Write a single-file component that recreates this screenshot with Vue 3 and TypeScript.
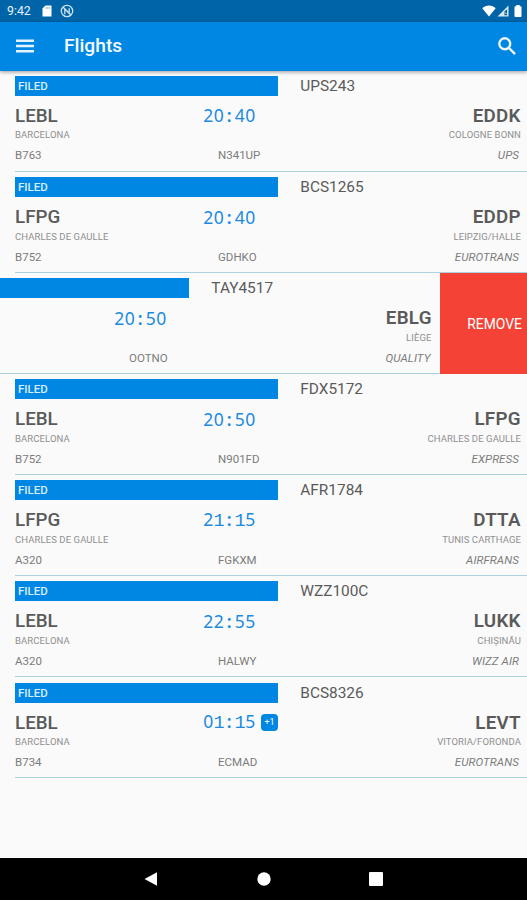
<script setup lang="ts">
interface Flight {
  callsign: string
  status: string
  from: string
  fromName: string
  time: string
  nextDay?: boolean
  to: string
  toName: string
  aircraft: string
  registration: string
  operator: string
  swiped?: boolean
}

const flights: Flight[] = [
  { callsign: 'UPS243', status: 'FILED', from: 'LEBL', fromName: 'BARCELONA', time: '20:40', to: 'EDDK', toName: 'COLOGNE BONN', aircraft: 'B763', registration: 'N341UP', operator: 'UPS' },
  { callsign: 'BCS1265', status: 'FILED', from: 'LFPG', fromName: 'CHARLES DE GAULLE', time: '20:40', to: 'EDDP', toName: 'LEIPZIG/HALLE', aircraft: 'B752', registration: 'GDHKO', operator: 'EUROTRANS' },
  { callsign: 'TAY4517', status: '', from: '', fromName: '', time: '20:50', to: 'EBLG', toName: 'LIÈGE', aircraft: '', registration: 'OOTNO', operator: 'QUALITY', swiped: true },
  { callsign: 'FDX5172', status: 'FILED', from: 'LEBL', fromName: 'BARCELONA', time: '20:50', to: 'LFPG', toName: 'CHARLES DE GAULLE', aircraft: 'B752', registration: 'N901FD', operator: 'EXPRESS' },
  { callsign: 'AFR1784', status: 'FILED', from: 'LFPG', fromName: 'CHARLES DE GAULLE', time: '21:15', to: 'DTTA', toName: 'TUNIS CARTHAGE', aircraft: 'A320', registration: 'FGKXM', operator: 'AIRFRANS' },
  { callsign: 'WZZ100C', status: 'FILED', from: 'LEBL', fromName: 'BARCELONA', time: '22:55', to: 'LUKK', toName: 'CHIȘINĂU', aircraft: 'A320', registration: 'HALWY', operator: 'WIZZ AIR' },
  { callsign: 'BCS8326', status: 'FILED', from: 'LEBL', fromName: 'BARCELONA', time: '01:15', nextDay: true, to: 'LEVT', toName: 'VITORIA/FORONDA', aircraft: 'B734', registration: 'ECMAD', operator: 'EUROTRANS' },
]
</script>

<template>
  <div class="screen">
    <div class="status">
      <span class="clock">9:42</span>
      <svg class="sd" viewBox="0 0 10 12"><path d="M3.4 0.5H9.5V11.5H0.5V3.6Z" fill="#fff" /><path d="M4 2V4M5.8 2V4M7.6 2V4" stroke="#0065a8" stroke-width=".7" opacity=".6" /></svg>
      <svg class="sync" viewBox="0 0 14 14" fill="none" stroke="#fff">
        <circle cx="7" cy="7" r="5.7" stroke-width="1.3" opacity=".8" />
        <path d="M4.8 10.2V5L9.2 9.4V4.2M3.2 3.2L10.8 10.8" stroke-width="1.3" opacity=".8" />
      </svg>
      <span class="spacer"></span>
      <svg class="wifi" viewBox="0 0 14 12"><path d="M0.3 3.2C4 -0.4 10 -0.4 13.7 3.2L7 11.5Z" fill="#fff" /></svg>
      <svg class="signal" viewBox="0 0 12 12"><path d="M0.5 11.5L11.5 0.5V11.5Z" fill="#fff" opacity=".85" /><path d="M7.4 6.6L10 4.2V10.2H7.4Z" fill="#0065a8" /><path d="M8 7.4L9.4 9" stroke="#fff" /></svg>
      <svg class="battery" viewBox="0 0 8 12"><path d="M2.3 0H5.7V1.2H6.6Q7.5 1.2 7.5 2.2V11Q7.5 12 6.6 12H1.4Q.5 12 .5 11V2.2Q.5 1.2 1.4 1.2H2.3Z" fill="#fff" /></svg>
    </div>
    <header class="appbar">
      <svg class="menu" viewBox="0 0 18 14"><path d="M0 1.7H18M0 7H18M0 12.3H18" stroke="#fff" stroke-width="2.5" opacity=".9" /></svg>
      <h1>Flights</h1>
      <svg class="search" viewBox="2.7 2.7 18.1 18.1"><path fill="#fff" stroke="#fff" stroke-width=".3" d="M15.5 14h-.79l-.28-.27A6.47 6.47 0 0 0 16 9.5 6.5 6.5 0 1 0 9.5 16c1.61 0 3.09-.59 4.23-1.57l.27.28v.79l5 4.99L20.49 19l-4.99-5zm-6 0C7.01 14 5 11.99 5 9.5S7.01 5 9.5 5 14 7.01 14 9.5 11.99 14 9.5 14z" /></svg>
    </header>
    <main class="list">
      <div v-for="f in flights" :key="f.callsign" class="row" :class="{ swiped: f.swiped }">
        <article class="flight">
          <div class="top">
            <div class="bar">{{ f.status }}</div>
            <div class="callsign">{{ f.callsign }}</div>
          </div>
          <div class="route">
            <b class="icao">{{ f.from }}</b>
            <span class="time"><i v-for="(c, n) in f.time" :key="n" :class="{ one: c === '1', colon: c === ':' }">{{ c }}</i></span>
            <span class="badge-slot"><span v-if="f.nextDay" class="badge">+1</span></span>
            <b class="icao to">{{ f.to }}</b>
          </div>
          <div class="names">
            <span>{{ f.fromName }}</span>
            <span>{{ f.toName }}</span>
          </div>
          <div class="details">
            <span class="aircraft">{{ f.aircraft }}</span>
            <span>{{ f.registration }}</span>
            <em>{{ f.operator }}</em>
          </div>
        </article>
        <button v-if="f.swiped" class="remove">REMOVE</button>
      </div>
    </main>
    <nav class="navbar">
      <svg viewBox="0 0 14 14"><path d="M13 0.3V13.7L0.5 7Z" fill="#fff" /></svg>
      <svg viewBox="0 0 14 14"><circle cx="7" cy="7" r="6.7" fill="#fff" /></svg>
      <svg viewBox="0 0 14 14"><rect width="14" height="14" rx="1" fill="#fff" /></svg>
    </nav>
  </div>
</template>

<style>
body { background: #fafafa; overflow: hidden; }
</style>

<style scoped>
.screen {
  width: 527px;
  height: 900px;
  display: flex;
  flex-direction: column;
  overflow: hidden;
  background: #fafafa;
  color: #5a5a5a;
  font-family: Roboto, sans-serif;
}
.status {
  height: 21.5px;
  flex: none;
  display: flex;
  align-items: center;
  padding: 0 5.5px 0 7px;
  background: #0065a8;
  color: #e8f2fa;
  font-size: 12.3px;
}
.clock { width: 35px; padding-top: 1px; }
.sd { width: 10px; height: 12px; }
.sync { width: 14px; height: 14px; margin-left: 7.5px; }
.spacer { flex: 1; }
.wifi { width: 14px; height: 12px; }
.signal { width: 12px; height: 12px; margin-left: 1px; }
.battery { width: 8px; height: 12px; margin-left: 5px; }
.appbar {
  height: 49.3px;
  flex: none;
  box-sizing: border-box;
  display: flex;
  align-items: center;
  padding: 0 11px 1px 16px;
  background: #0087e4;
  box-shadow: 0 1px 4px rgba(0, 0, 0, .4);
  z-index: 1;
}
.menu { width: 18px; height: 14px; }
h1 {
  flex: 1;
  margin: 0 0 0 30px;
  color: #f4faff;
  font-size: 19.2px;
  font-weight: 500;
}
.search { width: 18px; height: 18px; }
.list { flex: 1; }
.row { height: 101.1px; display: flex; overflow: hidden; }
.flight {
  width: 512px;
  margin-left: 15px;
  height: 101.1px;
  flex: none;
  box-sizing: border-box;
  padding-top: 5.2px;
  border-bottom: 1.5px solid #acd1df;
}
.swiped .flight { margin-left: -74px; width: 513.5px; }
.top { height: 20px; display: flex; align-items: center; }
.bar {
  width: 263px;
  height: 20px;
  box-sizing: border-box;
  padding-left: 3px;
  background: #0087e4;
  color: #d9edfc;
  font-size: 11.5px;
  font-weight: 500;
  line-height: 20px;
}
.callsign { margin-left: 22.3px; font-size: 15.4px; line-height: 20px; }
.route {
  height: 29px;
  padding: 6px 6.5px 0 0;
  box-sizing: border-box;
  display: grid;
  grid-template-columns: 188px 53px 1fr auto;
  grid-template-rows: 28px;
  align-items: center;
}
.icao { font-size: 18.8px; line-height: 28px; font-weight: 500; }
.to { font-weight: 600; letter-spacing: .25px; margin-right: -.25px; }
.time {
  display: flex;
  align-items: baseline;
  color: #1b8ae0;
  font-family: "Noto Sans", sans-serif;
  font-size: 17.5px;
  line-height: 27px;
}
.time i { width: 10.5px; flex: none; text-align: center; font-style: normal; }
.time .one { font-family: "Liberation Mono", monospace; font-size: 18.5px; }
.time .colon { font-weight: 600; }
.badge-slot { display: flex; padding-left: 5px; }
.badge {
  width: 17px;
  height: 16.5px;
  border-radius: 4px;
  background: #0087e4;
  color: #fff;
  font-size: 9px;
  line-height: 16.5px;
  text-align: center;
}
.names {
  height: 20px;
  padding-right: 6px;
  display: flex;
  align-items: center;
  justify-content: space-between;
  color: #8f8f8f;
  font-size: 9.5px;
  letter-spacing: .09px;
}
.details {
  height: 21px;
  padding-right: 8px;
  display: grid;
  grid-template-columns: 203px 1fr auto;
  align-items: center;
  color: #7c7c7c;
  font-size: 11.5px;
}
em { letter-spacing: .1px; }
.swiped .route, .swiped .names { padding-right: 8px; }
.swiped .details { padding-right: 9px; }
.remove {
  flex: 1;
  padding: 0 5px 0 0;
  border: 0;
  background: #f44336;
  color: #fff;
  font: 13.9px Roboto, sans-serif;
  text-align: right;
}
.navbar {
  height: 42px;
  flex: none;
  display: flex;
  justify-content: center;
  align-items: center;
  gap: 98.5px;
  background: #000;
}
.navbar svg { width: 14px; height: 14px; }
</style>
